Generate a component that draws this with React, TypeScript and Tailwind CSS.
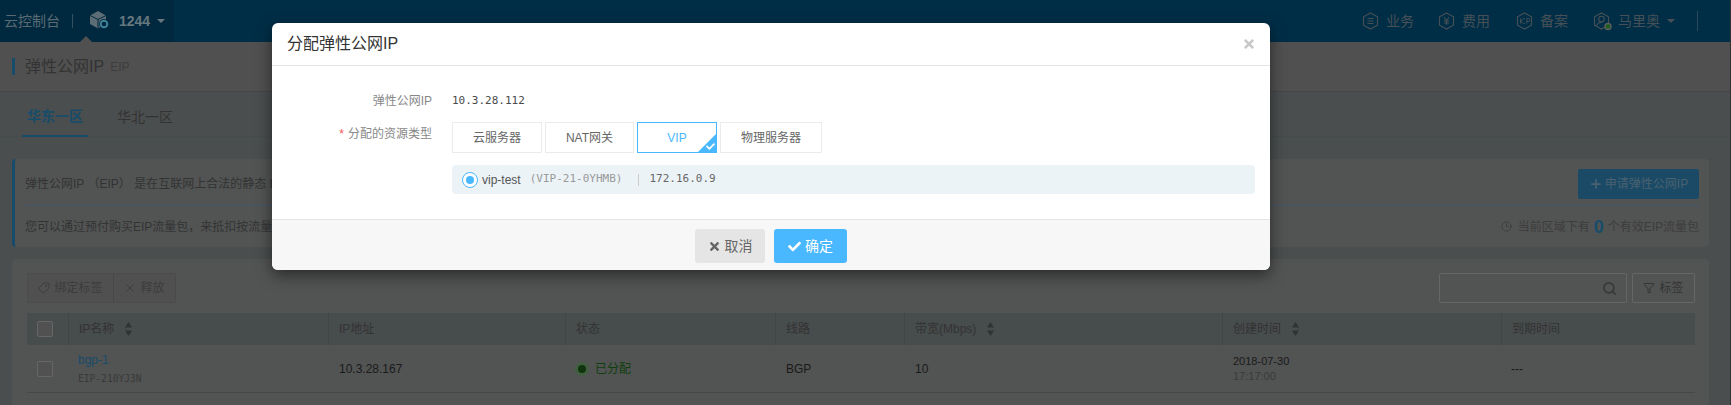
import React from 'react';
import { Clock3, Filter, Plus, Search, Tag, X } from 'lucide-react';
import { FaCheck, FaTimes } from 'react-icons/fa';

const sans = 'font-["Liberation_Sans","Noto_Sans_CJK_SC",sans-serif]';
const mono = 'font-["DejaVu_Sans_Mono",monospace]';

// hexagon outline used by the top nav items
const Hex: React.FC<{ children?: React.ReactNode; dot?: boolean }> = ({ children, dot }) => (
  <svg width="19" height="19" viewBox="0 0 19 19" fill="none" stroke="#465056" strokeWidth="1.1">
    <path d="M8.5 1 15.5 4.8V13.2L8.5 17 1.5 13.2V4.8Z" />
    {children}
    {dot && <circle cx="15" cy="14.5" r="3" fill="#1f5c1c" stroke="#5a6060" strokeWidth="1.4" />}
  </svg>
);

const Caret: React.FC<{ color: string }> = ({ color }) => (
  <svg width="8" height="4" viewBox="0 0 8 4" className="ml-[7px]">
    <path d="M0 0H8L4 4Z" fill={color} />
  </svg>
);

const Sort = () => (
  <svg width="7" height="14" viewBox="0 0 7 14" className="ml-[11px]">
    <path d="M3.5 0 7 5.5H0Z" fill="#2f3333" />
    <path d="M3.5 14 0 8.5H7Z" fill="#2f3333" />
  </svg>
);

const NavItem: React.FC<{ icon: React.ReactNode; label: string; className: string }> = ({ icon, label, className }) => (
  <div className={`flex items-center gap-[5px] text-[14px] text-[#465056] ${className}`}>
    {icon}
    <span>{label}</span>
  </div>
);

const headers: { label: string; sort?: boolean }[] = [
  { label: 'IP名称', sort: true },
  { label: 'IP地址' },
  { label: '状态' },
  { label: '线路' },
  { label: '带宽(Mbps)', sort: true },
  { label: '创建时间', sort: true },
  { label: '到期时间' },
];

const gridCols = 'grid grid-cols-[41px_260px_237px_210px_129px_318px_279px_194px]';

const Checkbox = () => <div className="h-[16px] w-[16px] rounded-[2px] border border-[#666666] bg-[#515151]" />;

const typeOptions = [
  { label: '云服务器', width: 'w-[90px]' },
  { label: 'NAT网关', width: 'w-[89px]' },
  { label: 'VIP', width: 'w-[80px]', active: true },
  { label: '物理服务器', width: 'w-[102px]' },
];

export default function App() {
  return (
    <div className={`relative h-[405px] w-[1731px] overflow-hidden border-r border-[#2e3232] bg-[#4a4e4e] ${sans}`}>
      {/* top bar */}
      <div className="flex h-[42px] items-center bg-[#002e47]">
        <div className="relative flex h-full w-[174px] items-center bg-[#00293f] pl-[4px]">
          <span className="text-[14px] text-[#5a6b74]">云控制台</span>
          <div className="ml-[12px] h-[14px] w-px bg-[#35505f]" />
          <svg width="22" height="20" viewBox="0 0 22 20" className="ml-[16px]">
            <path d="M9 0 17 4.5V13L9 17.5 1 13V4.5Z" fill="#5c6d76" />
            <path d="M9 8.5V17.5M1 4.5 9 8.5 17 4.5" stroke="#00293f" strokeWidth="1" fill="none" />
            <circle cx="15" cy="13" r="5" fill="#00293f" />
            <circle cx="15" cy="13" r="3.3" fill="none" stroke="#3f8299" strokeWidth="2" />
          </svg>
          <span className="ml-[8px] text-[14px] font-bold text-[#66777f]">1244</span>
          <Caret color="#66777f" />
          <div className="absolute bottom-0 left-[80px] h-0 w-0 border-x-[6px] border-b-[6px] border-x-transparent border-b-[#505050]" />
        </div>
        <div className="ml-[1188px] flex items-center">
          <NavItem
            className="w-[76px]"
            label="业务"
            icon={<Hex><path d="M5.5 6.5H11.5M5.5 9H11.5M5.5 11.5H11.5" /></Hex>}
          />
          <NavItem
            className="w-[78px]"
            label="费用"
            icon={<Hex><path d="M6 5.5 8.5 8.5 11 5.5M8.5 8.5V13M6 9H11M6 11H11" /></Hex>}
          />
          <NavItem
            className="w-[77px]"
            label="备案"
            icon={
              <Hex>
                <path d="M4.5 6.5V11.5M9 6.7A2.5 2.5 0 1 0 9 11.3M10.8 11.5V6.5H12.4A1.5 1.5 0 0 1 12.4 9.5H10.8" strokeWidth="0.9" />
              </Hex>
            }
          />
          <NavItem
            className="gap-[6px]"
            label="马里奥"
            icon={
              <Hex dot>
                <circle cx="8.5" cy="7" r="2.8" />
                <path d="M3.5 14C4 11.5 6 10.5 8.5 10.5" />
              </Hex>
            }
          />
          <Caret color="#465056" />
          <div className="ml-[22px] h-[20px] w-px bg-[#2c4757]" />
        </div>
      </div>

      {/* page title */}
      <div className="flex h-[50px] items-center border-b border-[#454545] bg-[#505050] pl-[12px]">
        <div className="h-[17px] w-[3px] bg-[#174c6a]" />
        <span className="ml-[10px] text-[16px] text-[#333333]">弹性公网IP</span>
        <span className="ml-[6px] text-[12px] text-[#3d3d3d]">EIP</span>
      </div>

      {/* region tabs */}
      <div className="flex h-[45px] border-b border-[#454c4c] pl-[22px]">
        <div className="flex h-[45px] w-[66px] items-center justify-center border-b-2 border-[#174c6a] pt-[6px] text-[14px] font-bold text-[#174c6a]">
          华东一区
        </div>
        <div className="ml-[29px] flex w-[56px] items-center justify-center pt-[6px] text-[14px] text-[#333333]">华北一区</div>
      </div>

      <div className="pl-[12px] pr-[21px] pt-[22px]">
        {/* notice */}
        <div className="rounded-[4px] border-l-[3px] border-[#174c6a] bg-[#525353] text-[12px] text-[#333333]">
          <div className="mx-[10px] flex h-[47px] items-center justify-between border-b border-[#43566a] pt-[4px]">
            <span>弹性公网IP （EIP） 是在互联网上合法的静态 IP 地址</span>
            <button className="flex h-[30px] w-[121px] items-center justify-center gap-[2px] rounded-[2px] bg-[#1b4a66] text-[12px] text-[#496170]">
              <Plus size={14} strokeWidth={3} />
              申请弹性公网IP
            </button>
          </div>
          <div className="mx-[10px] flex h-[41px] items-center justify-between">
            <span>您可以通过预付购买EIP流量包，来抵扣按流量计费的费用</span>
            <span className="flex items-center text-[#3d3d3d]">
              <Clock3 size={11} className="mr-[6px]" />
              当前区域下有
              <span className="mx-[4px] text-[18px] font-bold leading-none text-[#174c6a]">0</span>
              个有效EIP流量包
            </span>
          </div>
        </div>

        {/* table card */}
        <div className="mt-[12px] h-[200px] rounded-[4px] bg-[#525353] pl-[15px] pr-[14px] pt-[14px]">
          <div className="flex h-[30px] items-center justify-between">
            <div className="flex h-[30px] w-[149px] items-center rounded-[2px] border border-[#4b4b4b] bg-[#505050] text-[12px] text-[#3c3c3c]">
              <div className="flex h-full w-[86px] items-center justify-center gap-[4px] border-r border-[#484848]">
                <Tag size={12} className="rotate-90" />
                绑定标签
              </div>
              <div className="flex flex-1 items-center justify-center gap-[4px]">
                <X size={12} />
                释放
              </div>
            </div>
            <div className="flex items-center gap-[5px]">
              <div className="flex h-[30px] w-[188px] items-center justify-end rounded-[2px] border border-[#666666] pr-[9px]">
                <Search size={15} strokeWidth={2.5} className="text-[#383838]" />
              </div>
              <div className="flex h-[30px] w-[63px] items-center justify-center gap-[4px] rounded-[2px] border border-[#666666] text-[12px] text-[#333333]">
                <Filter size={12} strokeWidth={2} />
                标签
              </div>
            </div>
          </div>

          <div className={`mt-[10px] h-[32px] bg-[#474c4c] text-[12px] text-[#333333] ${gridCols}`}>
            <div className="flex items-center pl-[10px]">
              <Checkbox />
            </div>
            {headers.map((h) => (
              <div key={h.label} className="flex items-center border-l border-[#3f4646] px-[10px]">
                {h.label}
                {h.sort && <Sort />}
              </div>
            ))}
          </div>

          <div className={`h-[48px] border-b border-[#474747] text-[12px] text-[#1a1a1a] ${gridCols}`}>
            <div className="flex items-center pl-[10px]">
              <Checkbox />
            </div>
            <div className="flex flex-col justify-center gap-[3px] px-[10px] pt-[2px]">
              <span className="leading-[15px] text-[#174c6a]">bgp-1</span>
              <span className={`text-[9.6px] leading-[15px] text-[#3a3a3a] ${mono}`}>EIP-210YJ3N</span>
            </div>
            <div className="flex items-center px-[11px]">10.3.28.167</div>
            <div className="flex items-center px-[10px] text-[#0f3f0c]">
              <span className="mr-[6px] flex h-[14px] w-[14px] items-center justify-center rounded-full bg-[#425f42]">
                <span className="h-[8px] w-[8px] rounded-full bg-[#0f350f]" />
              </span>
              已分配
            </div>
            <div className="flex items-center px-[11px]">BGP</div>
            <div className="flex items-center px-[11px]">10</div>
            <div className="flex flex-col justify-center px-[11px] text-[11px] leading-[15px]">
              <span>2018-07-30</span>
              <span className="text-[#3a3a3a]">17:17:00</span>
            </div>
            <div className="flex items-center px-[10px]">---</div>
          </div>
        </div>
      </div>

      {/* allocate dialog */}
      <div className="absolute left-[272px] top-[23px] w-[998px] overflow-hidden rounded-[6px] bg-white shadow-[0_5px_15px_rgba(0,0,0,0.5)]">
        <div className="flex h-[43px] items-center justify-between border-b border-[#e5e5e5] pl-[15px] pr-[14px]">
          <span className="text-[16px] text-[#333333]">分配弹性公网IP</span>
          <FaTimes size={14} className="text-[#c8c8c8]" />
        </div>

        <div className="pb-[25px] pr-[15px] pt-[25px] text-[12px]">
          <div className="flex h-[20px] items-center">
            <div className="w-[160px] text-right text-[#888888]">弹性公网IP</div>
            <div className={`ml-[20px] text-[11px] text-[#4a4a4a] ${mono}`}>10.3.28.112</div>
          </div>

          <div className="mt-[11px] flex items-start">
            <div className="w-[160px] pt-[3px] text-right text-[#888888]">
              <span className="mr-[4px] text-[#f05050]">*</span>分配的资源类型
            </div>
            <div className="ml-[20px] flex gap-[3px]">
              {typeOptions.map((opt) => (
                <div
                  key={opt.label}
                  className={`relative flex h-[31px] items-center justify-center overflow-hidden border ${opt.width} ${
                    opt.active ? 'border-[#4ab8ff] text-[#4ab8ff]' : 'border-[#ebebeb] text-[#666666]'
                  }`}
                >
                  {opt.label}
                  {opt.active && (
                    <>
                      <div className="absolute bottom-0 right-0 h-0 w-0 border-b-[18px] border-l-[18px] border-b-[#4ab8ff] border-l-transparent" />
                      <FaCheck size={9} className="absolute bottom-[1px] right-[1px] text-white" />
                    </>
                  )}
                </div>
              ))}
            </div>
          </div>

          <div className="ml-[180px] mt-[12px] flex h-[29px] items-center rounded-[4px] bg-[#ecf3f7] pl-[10px] text-[#555555]">
            <span className="flex h-[16px] w-[16px] items-center justify-center rounded-full border border-[#4ab8ff] bg-white">
              <span className="h-[8px] w-[8px] rounded-full bg-[#4ab8ff]" />
            </span>
            <span className="ml-[4px]">vip-test</span>
            <span className={`ml-[9px] text-[11px] text-[#999999] ${mono}`}>(VIP-21-0YHMB)</span>
            <span className="ml-[16px] h-[12px] w-px bg-[#cccccc]" />
            <span className={`ml-[10px] text-[11px] text-[#666666] ${mono}`}>172.16.0.9</span>
          </div>
        </div>

        <div className="flex h-[51px] justify-center gap-[9px] border-t border-[#e5e5e5] bg-[#f7f7f7] pt-[9px]">
          <button className="flex h-[34px] w-[70px] items-center justify-center gap-[4px] rounded-[3px] bg-[#e5e5e5] text-[14px] text-[#666666]">
            <FaTimes size={13} />
            取消
          </button>
          <button className="flex h-[34px] w-[73px] items-center justify-center gap-[4px] rounded-[3px] bg-[#4ab8ff] text-[14px] text-white">
            <FaCheck size={13} />
            确定
          </button>
        </div>
      </div>
    </div>
  );
}
